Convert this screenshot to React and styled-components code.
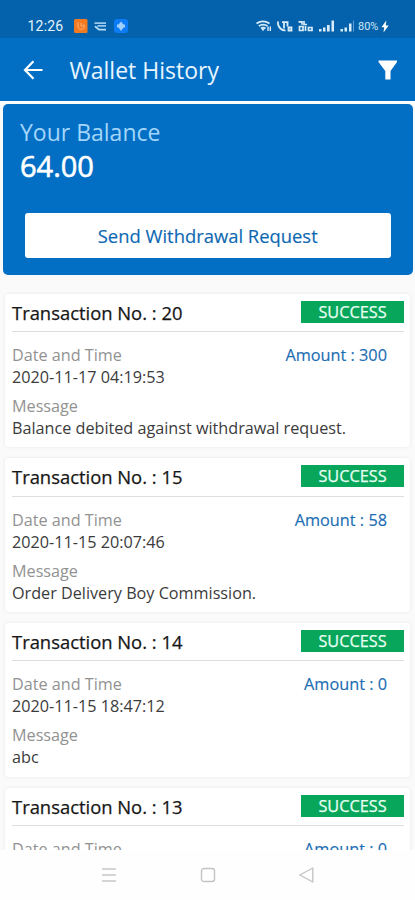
import React from 'react';
import styled, { createGlobalStyle } from 'styled-components';

const transactions = [
  {
    id: 20,
    date: '2020-11-17 04:19:53',
    amount: 300,
    message: 'Balance debited against withdrawal request.',
    status: 'SUCCESS',
  },
  {
    id: 15,
    date: '2020-11-15 20:07:46',
    amount: 58,
    message: 'Order Delivery Boy Commission.',
    status: 'SUCCESS',
  },
  {
    id: 14,
    date: '2020-11-15 18:47:12',
    amount: 0,
    message: 'abc',
    status: 'SUCCESS',
  },
  {
    id: 13,
    amount: 0,
    status: 'SUCCESS',
  },
];

function StatusLeftIcons() {
  return (
    <svg width="56" height="16" viewBox="0 0 56 16" fill="none">
      <rect x="0" y="1" width="13.5" height="14" rx="1.5" fill="#f47a20" />
      <path
        d="M4 4.5v3.5a3.2 3.2 0 1 0 5.8-1.6M7 5v3h2.5"
        stroke="#ffb47a"
        strokeWidth="1"
      />
      <path d="M20.500 5.200h11.500M23.500 7.800h8.500" stroke="#9cc8ea" strokeWidth="1.700" />
      <path d="M21 8.200l4 3.400h7" stroke="#b9dcf5" strokeWidth="1.800" />
      <rect x="40" y="1" width="14" height="14" rx="3" fill="#0b7cf5" />
      <path d="M47 3.5 49.500 6.500h1.500v3h-1.500L47 13 44.500 9.500h-1.500v-3h1.500z" fill="#9fd0fb" />
    </svg>
  );
}

function StatusRightIcons() {
  return (
    <svg width="100" height="16" viewBox="0 0 100 16" fill="none">
      <g stroke="#d9ecfa" strokeWidth="1.8">
        <path d="M.5 5.400Q7 1.200 13.500 5.400M2.800 8Q7 5.200 11.500 8M5 10.500Q7 9 9.500 10.500" />
        <path d="M12 8.500v4.500M14.300 8.500v4.500" strokeWidth="1.400" />
        <path d="M22 3.500q-.5 4.500 3 7.500 2 1.700 4.500 1.300M26 4.200h6.500M28 4.500v6M31.500 4.500v4" />
        <path d="M32.500 9.500h3v3h-3z" />
      </g>
      <path d="M5.700 11h2.600L7 13.500z" fill="#d9ecfa" />
      <g stroke="#d9ecfa" strokeWidth="1.700">
        <path d="M42.500 3.800h3.500v3M48 3v3.500h3M43.500 8.500v4h3.500V8.500zM49.500 8v5M52.500 9.500h3.500v3h-3.500z" />
      </g>
      <g fill="#d9ecfa">
        <rect x="63" y="11" width="2.500" height="2.500" />
        <rect x="67" y="9.500" width="2.500" height="4" />
        <rect x="71" y="7" width="2.700" height="6.500" />
        <rect x="75.500" y="2.500" width="2.500" height="11" />
        <rect x="84.500" y="11" width="2.500" height="2.500" />
        <rect x="88.500" y="9.500" width="2.500" height="4" />
        <rect x="93" y="5.500" width="2.500" height="8" />
      </g>
      <path d="M97.500 2.500v11" stroke="#5f9fd0" strokeWidth="1" />
    </svg>
  );
}

function App() {
  return (
    <StPage>
      <GlobalStyle />
      <StStatusBar>
        <StClock>12:26</StClock>
        <StatusLeftIcons />
        <StStatusRight>
          <StatusRightIcons />
          <StBattery>80%</StBattery>
          <svg width="8" height="13" viewBox="0 0 8 13">
            <path d="M5.3.5.5 7.300h2.700L2.500 12.500 7.700 5.500H4.800z" fill="#fff" />
          </svg>
        </StStatusRight>
      </StStatusBar>
      <StHeader>
        <svg width="20" height="20" viewBox="0 0 20 20" fill="none">
          <path
            d="M19.500 10H1.800M10.500 1.300 2 10l8.500 8.700"
            stroke="#fff"
            strokeWidth="2.200"
          />
        </svg>
        <StTitle>Wallet History</StTitle>
        <svg width="20" height="20" viewBox="0 0 20 20">
          <path d="M.5.500h18.500v1.500L12.500 11v8.500H7.300V11L.5 2z" fill="#fff" />
        </svg>
      </StHeader>
      <StContent>
        <StBalanceCard>
          <StBalanceLabel>Your Balance</StBalanceLabel>
          <StBalance>64.00</StBalance>
          <StWithdrawButton>Send Withdrawal Request</StWithdrawButton>
        </StBalanceCard>
        <StList>
          {transactions.map((item) => (
            <StCard key={item.id}>
              <StCardHead>
                <StCardTitle>Transaction No. : {item.id}</StCardTitle>
                <StBadge>{item.status}</StBadge>
              </StCardHead>
              <StRow>
                <StLabel>Date and Time</StLabel>
                <StAmount>Amount : {item.amount}</StAmount>
              </StRow>
              {item.date && <StValue>{item.date}</StValue>}
              {item.message && (
                <>
                  <StMessageLabel>Message</StMessageLabel>
                  <StValue>{item.message}</StValue>
                </>
              )}
            </StCard>
          ))}
        </StList>
      </StContent>
      <StNavBar>
        <svg width="16" height="16" viewBox="0 0 16 16">
          <path d="M1 2h14M1 8h14M1 14h14" stroke="#c8c8c8" strokeWidth="1.300" />
        </svg>
        <svg width="16" height="16" viewBox="0 0 16 16" fill="none">
          <rect x="1.500" y="1.500" width="13" height="13" rx="2.500" stroke="#c4c4c4" strokeWidth="1.400" />
        </svg>
        <svg width="16" height="16" viewBox="0 0 16 16" fill="none">
          <path d="M13.800 1v14L.8 8z" stroke="#c4c4c4" strokeWidth="1.400" strokeLinejoin="round" />
        </svg>
      </StNavBar>
    </StPage>
  );
}

export default App;

const GlobalStyle = createGlobalStyle`
  * {
    box-sizing: border-box;
  }
  body {
    margin: 0;
    background-color: #fefefe;
    font-family: 'Open Sans', 'Noto Sans', sans-serif;
  }
`;

const StPage = styled.div`
  width: 415px;
  height: 900px;
  display: flex;
  flex-direction: column;
  overflow: hidden;
`;

const StStatusBar = styled.div`
  height: 38px;
  flex: none;
  display: flex;
  align-items: center;
  padding: 14px 26px 0 27.5px;
  background-color: #0362ab;
`;

const StClock = styled.span`
  width: 46px;
  color: #e6f3fc;
  font-family: Roboto, sans-serif;
  font-size: 14px;
  letter-spacing: 0.2px;
`;

const StStatusRight = styled.div`
  display: flex;
  align-items: center;
  margin-left: auto;
`;

const StBattery = styled.span`
  width: 23px;
  margin-left: 2px;
  color: #cfe6f7;
  font-family: Roboto, sans-serif;
  font-size: 11px;
`;

const StHeader = styled.header`
  height: 63px;
  flex: none;
  display: flex;
  align-items: center;
  padding: 1px 17px 0 23px;
  background-color: #026fc5;
`;

const StTitle = styled.h1`
  flex: 1;
  margin: 0 0 0 26.5px;
  color: #e8f5ff;
  font-size: 23px;
  font-weight: 400;
`;

const StContent = styled.main`
  flex: 1;
  min-height: 0;
  overflow: hidden;
  padding-top: 3px;
  background-color: #fafafa;
  box-shadow: inset 0 4px 0 #ffffff;
`;

const StBalanceCard = styled.section`
  height: 170.5px;
  margin: 0 2px 0 3px;
  padding: 12px 21px 0 17px;
  border-radius: 5px;
  background-color: #026fc5;
`;

const StBalanceLabel = styled.div`
  color: #a3d6fa;
  font-size: 23px;
  line-height: 32px;
`;

const StBalance = styled.div`
  color: #ffffff;
  font-size: 29px;
  line-height: 36px;
  -webkit-text-stroke: 0.6px #ffffff;
`;

const StWithdrawButton = styled.button`
  display: block;
  width: 365.5px;
  height: 45px;
  margin: 29px 0 0 5px;
  padding: 0;
  border: none;
  border-radius: 3px;
  background-color: #ffffff;
  color: #0d68b3;
  font-family: inherit;
  font-size: 18.4px;
  -webkit-text-stroke: 0.15px #0d68b3;
`;

const StList = styled.div`
  display: flex;
  flex-direction: column;
  gap: 11px;
  padding: 19px 5px 0;
`;

const StCard = styled.article`
  height: 153.7px;
  flex: none;
  padding: 0 6px 0 7px;
  border-radius: 4px;
  background-color: #ffffff;
  box-shadow: 0 0 3px #e6e6e6;
`;

const StCardHead = styled.div`
  height: 38.5px;
  display: flex;
  align-items: flex-start;
  justify-content: space-between;
  padding-top: 7px;
  border-bottom: 1.5px solid #dedede;
`;

const StCardTitle = styled.div`
  color: #161616;
  font-size: 18.4px;
  line-height: 23px;
  -webkit-text-stroke: 0.25px #161616;
`;

const StBadge = styled.div`
  width: 103px;
  height: 22px;
  background-color: #07a65b;
  color: #e8fff2;
  font-size: 16.3px;
  line-height: 22px;
  text-align: center;
  -webkit-text-stroke: 0.25px #e8fff2;
`;

const StRow = styled.div`
  display: flex;
  justify-content: space-between;
  padding: 12px 17px 0 0;
`;

const StLabel = styled.div`
  color: #929292;
  font-size: 16.2px;
  line-height: 22px;
`;

const StMessageLabel = styled(StLabel)`
  margin-top: 7px;
`;

const StValue = styled.div`
  color: #3b3b3b;
  font-size: 16.2px;
  line-height: 22px;
`;

const StAmount = styled.div`
  color: #1a6db3;
  font-size: 16.3px;
  line-height: 22px;
  -webkit-text-stroke: 0.15px #1a6db3;
`;

const StNavBar = styled.nav`
  height: 50px;
  flex: none;
  display: flex;
  align-items: center;
  justify-content: center;
  gap: 83px;
  background-color: #fefefe;
`;
